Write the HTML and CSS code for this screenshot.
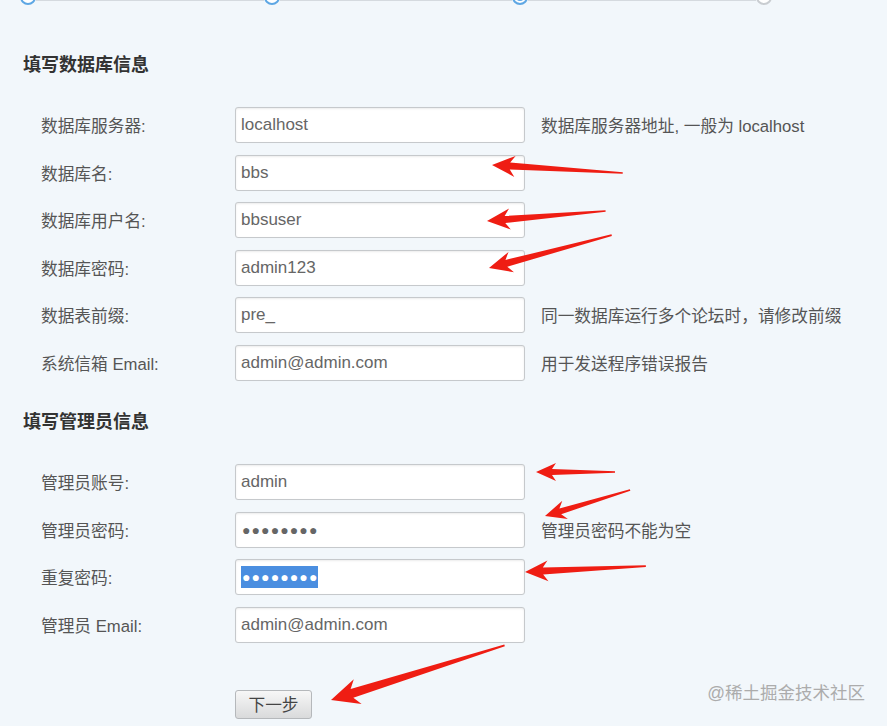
FILE: index.html
```html
<!DOCTYPE html>
<html lang="zh-CN">
<head>
<meta charset="utf-8">
<title>安装 - 填写数据库信息</title>
<link rel="stylesheet" href="styles.css">
</head>
<body>
<div class="page">
  <div class="steps">
    <span class="dot done"></span><span class="line l1"></span>
    <span class="dot done"></span><span class="line l2"></span>
    <span class="dot current"></span><span class="line l3"></span>
    <span class="dot todo"></span>
  </div>

  <section class="group">
    <h2 class="group-title">填写数据库信息</h2>
    <div class="rows">
      <div class="row"><span class="label">数据库服务器:</span><div class="field">localhost</div><span class="hint">数据库服务器地址, 一般为 localhost</span></div>
      <div class="row"><span class="label">数据库名:</span><div class="field">bbs</div></div>
      <div class="row"><span class="label">数据库用户名:</span><div class="field">bbsuser</div></div>
      <div class="row"><span class="label">数据库密码:</span><div class="field">admin123</div></div>
      <div class="row"><span class="label">数据表前缀:</span><div class="field">pre_</div><span class="hint">同一数据库运行多个论坛时，请修改前缀</span></div>
      <div class="row"><span class="label">系统信箱 Email:</span><div class="field">admin@admin.com</div><span class="hint">用于发送程序错误报告</span></div>
    </div>
  </section>

  <section class="group group-admin">
    <h2 class="group-title">填写管理员信息</h2>
    <div class="rows">
      <div class="row"><span class="label">管理员账号:</span><div class="field">admin</div></div>
      <div class="row"><span class="label">管理员密码:</span><div class="field pw"><span class="dots">●●●●●●●●</span></div><span class="hint">管理员密码不能为空</span></div>
      <div class="row"><span class="label">重复密码:</span><div class="field pw"><span class="dots selected">●●●●●●●●</span></div></div>
      <div class="row"><span class="label">管理员 Email:</span><div class="field">admin@admin.com</div></div>
    </div>
  </section>

  <div class="actions"><button class="btn" type="button">下一步</button></div>

  <div class="watermark">@稀土掘金技术社区</div>

  <svg class="arrows" width="887" height="726" viewBox="0 0 887 726" aria-hidden="true">
    <g fill="#ef1d13">
      <g transform="translate(492 165) rotate(3.5)"><polygon points="0,0 23,-10.5 18,-3.5 131,-0.8 131,0.8 18,3.5 23,10.5"/></g>
      <g transform="translate(487 221) rotate(-4.8)"><polygon points="0,0 23,-10.5 18,-3.5 119,-0.8 119,0.8 18,3.5 23,10.5"/></g>
      <g transform="translate(489 268) rotate(-15)"><polygon points="0,0 23,-10.5 18,-3.5 127,-0.8 127,0.8 18,3.5 23,10.5"/></g>
      <g transform="translate(536 472) rotate(0)"><polygon points="0,0 20,-9 16,-3 79,-0.8 79,0.8 16,3 20,9"/></g>
      <g transform="translate(545 516) rotate(-17)"><polygon points="0,0 21,-9.5 16,-3 89,-0.8 89,0.8 16,3 21,9.5"/></g>
      <g transform="translate(525 572) rotate(-2.8)"><polygon points="0,0 23,-10.5 18,-3.5 121,-0.8 121,0.8 18,3.5 23,10.5"/></g>
      <g transform="translate(331 700) rotate(-17.5)"><polygon points="0,0 28,-13 22,-4.5 182,-0.9 182,0.9 22,4.5 28,13"/></g>
    </g>
  </svg>
</div>
</body>
</html>
```
FILE: styles.css
```css
* { box-sizing: border-box; }

html, body {
  margin: 0;
  padding: 0;
  background: #f2f7fb;
}

body {
  font-family: "Liberation Sans", "Noto Sans CJK SC", sans-serif;
  color: #555;
  overflow: hidden;
}

.page {
  position: relative;
  width: 887px;
  height: 726px;
  overflow: hidden;
}

/* progress steps (mostly cut off at the top) */
.steps {
  display: flex;
  align-items: flex-start;
  height: 15px;
  margin-top: -11px;
  padding-left: 20px;
}
.dot {
  flex: 0 0 auto;
  width: 16px;
  height: 16px;
  border-radius: 50%;
  background: #fff;
  border: 2px solid #5ea7e4;
}
.dot.current {
  box-shadow: inset 0 0 0 2px #fff, inset 0 0 0 5px #5ea7e4;
}
.dot.todo {
  border-color: #c9cdd1;
}
.line {
  flex: 0 0 auto;
  height: 1px;
  margin-top: 11px;
  background: #d5dadf;
}
.l1 { width: 228px; }
.l2 { width: 232px; }
.l3 { width: 228px; }

/* groups */
.group-title {
  margin: 49px 0 0 23px;
  font-size: 18px;
  line-height: 24px;
  font-weight: bold;
  color: #333;
}
.group-admin .group-title {
  margin-top: 29px;
}

.rows {
  display: flex;
  flex-direction: column;
  gap: 11.6px;
  margin-top: 30px;
}

.row {
  display: flex;
  align-items: center;
  height: 36px;
}

.label {
  flex: 0 0 235px;
  padding-left: 41px;
  font-size: 16.7px;
  color: #555;
}

.field {
  flex: 0 0 290px;
  height: 36px;
  display: flex;
  align-items: center;
  padding-left: 5px;
  background: #fff;
  border: 1px solid #c6c9cc;
  border-radius: 3px;
  box-shadow: inset 0 1px 2px rgba(0, 0, 0, 0.08), 0 0 1px rgba(0, 0, 0, 0.05);
  font-size: 17px;
  color: #666;
}

.dots {
  font-size: 14px;
  letter-spacing: 1.1px;
  line-height: 22px;
  color: #666;
  padding: 0 0 0 1px;
}
.dots.selected {
  background: #4a8ee0;
  color: #fff;
}

.hint {
  margin-left: 16px;
  font-size: 16.7px;
  color: #555;
}

.actions {
  margin-top: 47px;
  padding-left: 235px;
}
.btn {
  width: 77px;
  height: 29px;
  padding: 0;
  border: 1px solid #b5b8bb;
  border-radius: 3px;
  background: linear-gradient(#f7f7f7, #d9dadb);
  font-family: "Liberation Sans", "Noto Sans CJK SC", sans-serif;
  font-size: 16.7px;
  color: #444;
}

.watermark {
  position: absolute;
  right: 22px;
  top: 681px;
  font-size: 17.5px;
  line-height: 24px;
  color: #acacac;
}

.arrows {
  position: absolute;
  left: 0;
  top: 0;
  pointer-events: none;
}
```
